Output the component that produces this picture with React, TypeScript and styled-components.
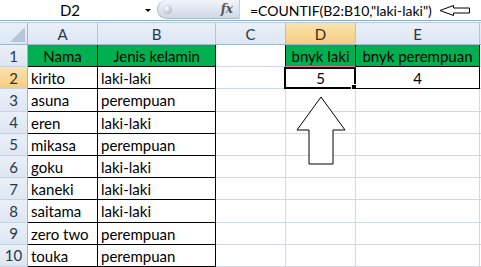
import React from "react";
import styled, { createGlobalStyle } from "styled-components";

const cellFont = `"Lato", "Open Sans", sans-serif`;

const rows: [string, string][] = [
  ["kirito", "laki-laki"],
  ["asuna", "perempuan"],
  ["eren", "laki-laki"],
  ["mikasa", "perempuan"],
  ["goku", "laki-laki"],
  ["kaneki", "laki-laki"],
  ["saitama", "laki-laki"],
  ["zero two", "perempuan"],
  ["touka", "perempuan"],
];

const letters = ["A", "B", "C", "D", "E"];

const App: React.FC = () => {
  return (
    <Page>
      <GlobalStyle />
      <FormulaBar>
        <NameBox>D2</NameBox>
        <DropArrow />
        <FxPill>
          <Knob />
          <Fx>fx</Fx>
        </FxPill>
        <Formula>=COUNTIF(B2:B10,"laki-laki")</Formula>
      </FormulaBar>
      <BarGap />

      <Sheet>
        <Corner>
          <CornerMark />
        </Corner>
        {letters.map((l) => (
          <ColHead key={l} $active={l === "D"}>
            {l}
          </ColHead>
        ))}
        <ColHead $active={false} />

        {/* row 1 */}
        <RowHead $active={false}>1</RowHead>
        <Cell $green $boxed $center>Nama</Cell>
        <Cell $green $boxed $center>Jenis kelamin</Cell>
        <Cell $darkRight />
        <Cell $green $boxed $center $pinkBottom>bnyk laki</Cell>
        <Cell $green $boxed $center>bnyk perempuan</Cell>
        <Cell />

        {/* row 2 */}
        <RowHead $active>2</RowHead>
        <Cell $boxed>{rows[0][0]}</Cell>
        <Cell $boxed>{rows[0][1]}</Cell>
        <Cell $darkRight />
        <Cell $boxed $center>
          5
          <Selection>
            <FillHandle />
          </Selection>
        </Cell>
        <Cell $boxed $center>4</Cell>
        <Cell />

        {rows.slice(1).map((r, i) => (
          <React.Fragment key={i}>
            <RowHead $active={false}>{i + 3}</RowHead>
            <Cell $boxed>{r[0]}</Cell>
            <Cell $boxed>{r[1]}</Cell>
            <Cell />
            <Cell />
            <Cell />
            <Cell />
          </React.Fragment>
        ))}
      </Sheet>

      <UpArrow width="51" height="70" viewBox="0 0 51 70">
        <polygon
          points="25,1 49,34 37,34 37,68 13,68 13,34 1,34"
          fill="#fff"
          stroke="#000"
          strokeWidth="1"
        />
      </UpArrow>
      <LeftArrow width="32" height="12" viewBox="0 0 32 12">
        <polygon
          points="1,5.5 14.5,0.5 14.5,3 30.5,3 30.5,8 14.5,8 14.5,10.5"
          fill="#fff"
          stroke="#000"
          strokeWidth="1"
        />
      </LeftArrow>
    </Page>
  );
};

const GlobalStyle = createGlobalStyle`
  html, body {
    margin: 0;
    padding: 0;
    background: #fff;
  }
`;

const Page = styled.div`
  position: relative;
  width: 481px;
  height: 267px;
  overflow: hidden;
  font-family: ${cellFont};
  background: #fff;
`;

const FormulaBar = styled.div`
  display: flex;
  align-items: center;
  height: 20px;
  border-bottom: 1px solid #8fa9c8;
  background: #fff;
`;

const NameBox = styled.div`
  width: 140px;
  text-align: center;
  font-size: 15px;
  color: #000;
`;

const DropArrow = styled.div`
  width: 0;
  height: 0;
  margin-left: 5px;
  border-left: 3px solid transparent;
  border-right: 3px solid transparent;
  border-top: 3px solid #000;
`;

const FxPill = styled.div`
  display: flex;
  align-items: center;
  justify-content: space-between;
  box-sizing: border-box;
  height: 19px;
  width: 83px;
  margin-left: 6px;
  align-self: flex-start;
  padding: 0 6px 0 5px;
  border: 1px solid #a9b9cd;
  border-top: none;
  border-right: 1px solid #c3cfdd;
  border-top-left-radius: 10px;
  border-bottom-left-radius: 10px;
  background: linear-gradient(#f1f4f9, #dde5ef 55%, #cfd9e6);
`;

const Knob = styled.div`
  width: 9px;
  height: 9px;
  border-radius: 50%;
  background: radial-gradient(circle at 40% 35%, #ffffff, #b7bec8 70%, #8f98a5);
`;

const Fx = styled.span`
  font-family: "DejaVu Serif", "Liberation Serif", serif;
  font-style: italic;
  font-weight: bold;
  font-size: 12px;
  color: #555;
`;

const Formula = styled.div`
  margin-left: 10px;
  font-size: 14px;
  color: #000;
  white-space: nowrap;
`;

const BarGap = styled.div`
  height: 1px;
  background: #fff;
  border-bottom: 1px solid #b9cadf;
`;

const Sheet = styled.div`
  display: grid;
  grid-template-columns: 28px 70px 118px 70px 70px 124px 1fr;
  grid-template-rows: 22px repeat(10, 22.2px);
`;

const headBg = "linear-gradient(#eaf0f8, #dde6f2)";
const activeBg = "linear-gradient(#fbe2b2, #f5cd7f)";

const Corner = styled.div`
  position: relative;
  box-sizing: border-box;
  background: ${headBg};
  border-right: 1px solid #9eb6ce;
  border-bottom: 1px solid #9eb6ce;
`;

const CornerMark = styled.div`
  position: absolute;
  right: 2px;
  bottom: 2px;
  width: 0;
  height: 0;
  border-left: 15px solid transparent;
  border-bottom: 15px solid #b6c6da;
`;

const ColHead = styled.div<{ $active: boolean }>`
  box-sizing: border-box;
  display: flex;
  align-items: center;
  justify-content: center;
  font-size: 15px;
  color: ${(p) => (p.$active ? "#3b2f17" : "#27384d")};
  background: ${(p) => (p.$active ? activeBg : headBg)};
  border-right: 1px solid #b4c4d8;
  border-bottom: 1px solid #9eb6ce;
`;

const RowHead = styled.div<{ $active: boolean }>`
  box-sizing: border-box;
  display: flex;
  align-items: center;
  justify-content: center;
  font-size: 15px;
  color: ${(p) => (p.$active ? "#3b2f17" : "#27384d")};
  background: ${(p) => (p.$active ? activeBg : headBg)};
  border-right: 1px solid #9eb6ce;
  border-bottom: 1px solid #c5d2e2;
`;

const Cell = styled.div<{
  $green?: boolean;
  $boxed?: boolean;
  $center?: boolean;
  $darkRight?: boolean;
  $pinkBottom?: boolean;
}>`
  position: relative;
  box-sizing: border-box;
  display: flex;
  align-items: center;
  justify-content: ${(p) => (p.$center ? "center" : "flex-start")};
  padding: 1px 0 0 3px;
  padding-left: ${(p) => (p.$center ? "0" : "3px")};
  font-size: 15px;
  color: #000;
  white-space: nowrap;
  background: ${(p) => (p.$green ? "#00b050" : "#fff")};
  border-right: 1px solid
    ${(p) => (p.$boxed || p.$darkRight ? "#000" : "#d0d7e5")};
  border-bottom: 1px solid
    ${(p) => (p.$pinkBottom ? "#e86fa0" : p.$boxed ? "#000" : "#d0d7e5")};
`;

const Selection = styled.div`
  position: absolute;
  left: -2px;
  top: 0;
  right: -1px;
  bottom: -1px;
  border: 2px solid #000;
  pointer-events: none;
`;

const FillHandle = styled.div`
  position: absolute;
  right: -4px;
  bottom: -4px;
  width: 5px;
  height: 5px;
  background: #000;
  border: 1px solid #fff;
`;

const UpArrow = styled.svg`
  position: absolute;
  left: 296px;
  top: 96px;
`;

const LeftArrow = styled.svg`
  position: absolute;
  left: 439px;
  top: 5px;
`;

export default App;
